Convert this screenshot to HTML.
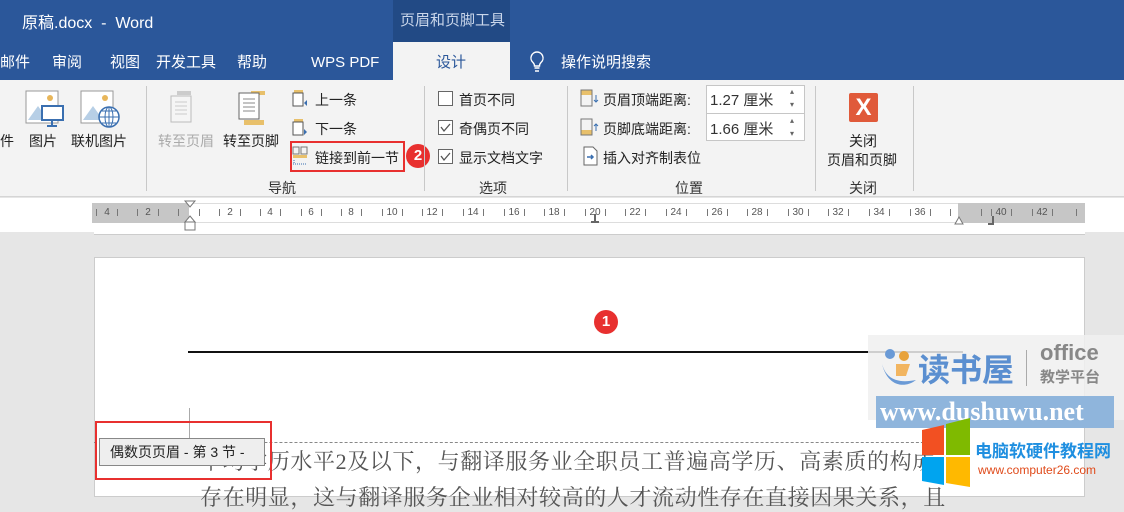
<!DOCTYPE html>
<html><head><meta charset="utf-8"><style>
*{margin:0;padding:0;box-sizing:border-box}
body{width:1124px;height:488px;overflow:hidden;background:#e6e6e6;font-family:"Liberation Sans","Noto Sans CJK SC",sans-serif;position:relative}
.a{position:absolute;white-space:nowrap}
.t{color:#fff;font-size:15px}
.r{font-size:14px;color:#222}
.g{font-size:14px;color:#333}
.vs{position:absolute;width:1px;background:#c8c8c8}
.badge{position:absolute;width:24px;height:24px;border-radius:12px;background:#e8302f;color:#fff;font-size:15px;font-weight:bold;text-align:center;line-height:24px}
.n{position:absolute;top:207px;font-size:10px;color:#555;transform:translateX(-50%)}
.k{position:absolute;top:209px;width:1px;height:7px;background:#777}
</style></head><body>
<div class="a" style="left:0;top:0;width:1124px;height:80px;background:#2b579a"></div>
<div class="a" style="left:393px;top:0;width:117px;height:42px;background:#224a85"></div>
<div class="a t" style="left:22px;top:9px;font-size:16px">原稿.docx &nbsp;-&nbsp; Word</div>
<div class="a t" style="left:400px;top:9px;color:#c9d6ea">页眉和页脚工具</div>
<div class="a t" style="left:0;top:51px">邮件</div>
<div class="a t" style="left:52px;top:51px">审阅</div>
<div class="a t" style="left:110px;top:51px">视图</div>
<div class="a t" style="left:156px;top:51px">开发工具</div>
<div class="a t" style="left:237px;top:51px">帮助</div>
<div class="a t" style="left:311px;top:54px">WPS PDF</div>
<div class="a" style="left:393px;top:42px;width:117px;height:39px;background:#f3f3f3"></div>
<div class="a" style="left:436px;top:51px;color:#2b579a;font-size:15px">设计</div>
<svg class="a" style="left:528px;top:50px" width="18" height="24"><path d="M9 2a6 6 0 0 0-4 10.5c1 1 1.5 2 1.5 3.5h5c0-1.5.5-2.5 1.5-3.5A6 6 0 0 0 9 2zM6.5 18h5M7 21h4" fill="none" stroke="#fff" stroke-width="1.4"/></svg>
<div class="a t" style="left:561px;top:51px">操作说明搜索</div>
<div class="a" style="left:0;top:80px;width:1124px;height:117px;background:#f3f3f3;border-bottom:1px solid #d5d5d5"></div>
<svg class="a" style="left:25px;top:90px" width="40" height="38"><rect x="1" y="1" width="32" height="32" fill="#fff" stroke="#999"/><circle cx="25" cy="8" r="3" fill="#e8b65a"/><path d="M3 30l10-14 10 14z" fill="#b7cfe6"/><rect x="17" y="16" width="21" height="14" fill="#fff" stroke="#3a6fb0" stroke-width="2"/><path d="M27 30v5M22 36h10" stroke="#3a6fb0" stroke-width="2"/></svg>
<svg class="a" style="left:80px;top:90px" width="42" height="38"><rect x="1" y="1" width="32" height="32" fill="#fff" stroke="#999"/><circle cx="25" cy="8" r="3" fill="#e8b65a"/><path d="M3 30l10-14 10 14z" fill="#b7cfe6"/><circle cx="29" cy="27" r="10" fill="#fff" stroke="#3a6fb0" stroke-width="1.5"/><path d="M19 27h20M29 17v20M22 21h14M22 33h14" stroke="#3a6fb0" stroke-width="1"/><ellipse cx="29" cy="27" rx="4" ry="10" fill="none" stroke="#3a6fb0"/></svg>
<div class="a r" style="left:0;top:131px">件</div>
<div class="a r" style="left:29px;top:131px">图片</div>
<div class="a r" style="left:71px;top:131px">联机图片</div>
<div class="vs" style="left:146px;top:86px;height:105px"></div>
<svg class="a" style="left:168px;top:90px" width="30" height="38"><rect x="9" y="1" width="14" height="4" fill="#ccc"/><rect x="3" y="6" width="20" height="26" fill="#f5f5f5" stroke="#bbb"/><path d="M7 12h12M7 16h12M7 20h12M7 24h12" stroke="#ccc"/></svg>
<svg class="a" style="left:236px;top:90px" width="30" height="38"><rect x="15" y="1" width="14" height="4" fill="#e8c06b"/><rect x="3" y="3" width="20" height="26" fill="#fff" stroke="#666"/><path d="M7 9h12M7 13h12M7 17h12M7 21h12" stroke="#888"/><rect x="8" y="30" width="20" height="5" fill="#e8c06b"/></svg>
<div class="a r" style="left:158px;top:131px;color:#aaa">转至页眉</div>
<div class="a r" style="left:223px;top:131px">转至页脚</div>
<svg class="a" style="left:292px;top:89px" width="16" height="18"><rect x="2" y="1" width="9" height="3" fill="#e8c06b"/><rect x="1" y="4" width="10" height="13" fill="#fff" stroke="#555"/><path d="M15 11l-3 3 3 3z" fill="#3a6fb0"/></svg>
<div class="a r" style="left:315px;top:90px">上一条</div>
<svg class="a" style="left:292px;top:118px" width="16" height="18"><rect x="2" y="1" width="9" height="3" fill="#e8c06b"/><rect x="1" y="4" width="10" height="13" fill="#fff" stroke="#555"/><path d="M12 11l3 3-3 3z" fill="#3a6fb0"/></svg>
<div class="a r" style="left:315px;top:119px">下一条</div>
<svg class="a" style="left:292px;top:146px" width="16" height="20"><rect x="1" y="1" width="6" height="7" fill="none" stroke="#777"/><rect x="9" y="1" width="6" height="7" fill="none" stroke="#777"/><rect x="1" y="9" width="14" height="3" fill="#e8c06b"/><path d="M2 14v4M1 18h14" stroke="#3a6fb0" stroke-dasharray="1 1"/></svg>
<div class="a r" style="left:315px;top:148px">链接到前一节</div>
<div class="a" style="left:290px;top:141px;width:115px;height:31px;border:2px solid #e8302f"></div>
<div class="badge" style="left:406px;top:144px">2</div>
<div class="a g" style="left:268px;top:178px">导航</div>
<div class="vs" style="left:424px;top:86px;height:105px"></div>
<svg class="a" style="left:438px;top:91px" width="15" height="75"><rect x="0.5" y="0.5" width="14" height="14" fill="#fff" stroke="#666"/><rect x="0.5" y="29.5" width="14" height="14" fill="#fff" stroke="#666"/><rect x="0.5" y="58.5" width="14" height="14" fill="#fff" stroke="#666"/><path d="M3 36l3 4 6-7M3 65l3 4 6-7" fill="none" stroke="#555" stroke-width="1.3"/></svg>
<div class="a r" style="left:459px;top:90px">首页不同</div>
<div class="a r" style="left:459px;top:119px">奇偶页不同</div>
<div class="a r" style="left:459px;top:148px">显示文档文字</div>
<div class="a g" style="left:479px;top:178px">选项</div>
<div class="vs" style="left:567px;top:86px;height:105px"></div>
<svg class="a" style="left:580px;top:89px" width="20" height="18"><rect x="1" y="1" width="11" height="5" fill="#e8c06b"/><rect x="1" y="1" width="11" height="16" fill="none" stroke="#777"/><path d="M16 6v7M14 11l2 2 2-2" stroke="#3a6fb0" fill="none"/></svg>
<div class="a r" style="left:603px;top:90px">页眉顶端距离:</div>
<svg class="a" style="left:580px;top:118px" width="20" height="18"><rect x="1" y="12" width="11" height="5" fill="#e8c06b"/><rect x="1" y="1" width="11" height="16" fill="none" stroke="#777"/><path d="M16 13v-7M14 8l2-2 2 2" stroke="#3a6fb0" fill="none"/></svg>
<div class="a r" style="left:603px;top:119px">页脚底端距离:</div>
<div class="a" style="left:706px;top:85px;width:99px;height:56px;border:1px solid #c6c6c6;background:#fff"></div>
<div class="a" style="left:706px;top:113px;width:99px;height:1px;background:#c6c6c6"></div>
<div class="a" style="left:710px;top:89px;font-size:15px;color:#333">1.27 厘米</div>
<div class="a" style="left:710px;top:118px;font-size:15px;color:#333">1.66 厘米</div>
<div class="a" style="left:790px;top:85px;font-size:8px;color:#666;line-height:13px">▴<br>▾</div>
<div class="a" style="left:790px;top:114px;font-size:8px;color:#666;line-height:13px">▴<br>▾</div>
<svg class="a" style="left:583px;top:146px" width="16" height="20"><path d="M1 1h9l4 4v14H1z" fill="#fff" stroke="#666"/><path d="M4 11h6M8 9l2 2-2 2" stroke="#3a6fb0" fill="none" stroke-width="1.5"/></svg>
<div class="a r" style="left:603px;top:148px">插入对齐制表位</div>
<div class="a g" style="left:675px;top:178px">位置</div>
<div class="vs" style="left:815px;top:86px;height:105px"></div>
<div class="a" style="left:849px;top:93px;width:29px;height:29px;background:#e05a3a;border-radius:2px;color:#fff;font-size:24px;font-weight:bold;text-align:center;line-height:29px">X</div>
<div class="a r" style="left:849px;top:131px">关闭</div>
<div class="a r" style="left:827px;top:150px">页眉和页脚</div>
<div class="a g" style="left:849px;top:178px">关闭</div>
<div class="vs" style="left:913px;top:86px;height:105px"></div>
<!-- ruler -->
<div class="a" style="left:0;top:198px;width:1124px;height:34px;background:#fff"></div>
<div class="a" style="left:92px;top:203px;width:993px;height:20px;background:#fff;border:1px solid #ddd"></div>
<div class="a" style="left:92px;top:203px;width:97px;height:20px;background:#c6c6c6"></div>
<div class="a" style="left:958px;top:203px;width:127px;height:20px;background:#c6c6c6"></div>
<div class="n" style="left:107px">4</div><div class="n" style="left:148px">2</div>
<div class="n" style="left:230px">2</div><div class="n" style="left:270px">4</div><div class="n" style="left:311px">6</div><div class="n" style="left:351px">8</div><div class="n" style="left:392px">10</div><div class="n" style="left:432px">12</div><div class="n" style="left:473px">14</div><div class="n" style="left:514px">16</div><div class="n" style="left:554px">18</div><div class="n" style="left:595px">20</div><div class="n" style="left:635px">22</div><div class="n" style="left:676px">24</div><div class="n" style="left:717px">26</div><div class="n" style="left:757px">28</div><div class="n" style="left:798px">30</div><div class="n" style="left:838px">32</div><div class="n" style="left:879px">34</div><div class="n" style="left:920px">36</div><div class="n" style="left:1001px">40</div><div class="n" style="left:1042px">42</div>
<div class="k" style="left:96px"></div><div class="k" style="left:117px"></div><div class="k" style="left:137px"></div><div class="k" style="left:158px"></div><div class="k" style="left:178px"></div><div class="k" style="left:199px"></div><div class="k" style="left:219px"></div><div class="k" style="left:240px"></div><div class="k" style="left:260px"></div><div class="k" style="left:280px"></div><div class="k" style="left:301px"></div><div class="k" style="left:321px"></div><div class="k" style="left:341px"></div><div class="k" style="left:361px"></div><div class="k" style="left:382px"></div><div class="k" style="left:402px"></div><div class="k" style="left:422px"></div><div class="k" style="left:442px"></div><div class="k" style="left:463px"></div><div class="k" style="left:483px"></div><div class="k" style="left:504px"></div><div class="k" style="left:524px"></div><div class="k" style="left:544px"></div><div class="k" style="left:564px"></div><div class="k" style="left:585px"></div><div class="k" style="left:605px"></div><div class="k" style="left:625px"></div><div class="k" style="left:645px"></div><div class="k" style="left:666px"></div><div class="k" style="left:686px"></div><div class="k" style="left:707px"></div><div class="k" style="left:727px"></div><div class="k" style="left:747px"></div><div class="k" style="left:767px"></div><div class="k" style="left:788px"></div><div class="k" style="left:808px"></div><div class="k" style="left:828px"></div><div class="k" style="left:848px"></div><div class="k" style="left:869px"></div><div class="k" style="left:889px"></div><div class="k" style="left:910px"></div><div class="k" style="left:930px"></div><div class="k" style="left:950px"></div><div class="k" style="left:981px"></div><div class="k" style="left:991px"></div><div class="k" style="left:1011px"></div><div class="k" style="left:1032px"></div><div class="k" style="left:1052px"></div><div class="k" style="left:1076px"></div>
<svg class="a" style="left:183px;top:200px" width="14" height="32"><path d="M2 1h10l-5 6zM7 16l5 6H2zM2 22h10v8H2z" fill="#fff" stroke="#777"/></svg>
<svg class="a" style="left:590px;top:214px" width="10" height="10"><path d="M5 0v8M1 8h8" stroke="#666" stroke-width="2"/></svg>
<svg class="a" style="left:953px;top:214px" width="46" height="12"><path d="M2 10l4-7 4 7z" fill="#fff" stroke="#777"/><path d="M40 2v8h-5" stroke="#666" stroke-width="2" fill="none"/></svg>
<div class="a" style="left:94px;top:232px;width:991px;height:3px;background:#fff;border-bottom:1px solid #ccc"></div>
<!-- page -->
<div class="a" style="left:94px;top:257px;width:991px;height:240px;background:#fff;border:1px solid #ccc"></div>
<div class="badge" style="left:594px;top:310px">1</div>
<div class="a" style="left:188px;top:351px;width:775px;height:2px;background:#111"></div>
<div class="a" style="left:189px;top:408px;width:1px;height:30px;background:#aaa"></div>
<div class="a" style="left:94px;top:442px;width:870px;border-top:1px dashed #888"></div>
<div class="a" style="left:200px;top:445px;font-size:22px;letter-spacing:0.6px;color:#555;font-family:'Liberation Serif','Noto Serif CJK SC',serif">平均学历水平2及以下，与翻译服务业全职员工普遍高学历、高素质的构成</div>
<div class="a" style="left:200px;top:481px;font-size:22px;letter-spacing:0.6px;color:#555;font-family:'Liberation Serif','Noto Serif CJK SC',serif">存在明显，这与翻译服务企业相对较高的人才流动性存在直接因果关系，且</div>
<div class="a" style="left:99px;top:438px;width:166px;height:28px;background:#eee;border:1px solid #888;font-size:14px;color:#222;line-height:26px;padding-left:10px">偶数页页眉 - 第 3 节 -</div>
<div class="a" style="left:95px;top:421px;width:177px;height:59px;border:2px solid #e8302f"></div>
<!-- watermark -->
<div class="a" style="left:868px;top:335px;width:256px;height:85px;background:rgba(240,240,240,0.85)"></div>
<svg class="a" style="left:878px;top:346px" width="40" height="44"><circle cx="12" cy="8" r="5" fill="#6a9ad6"/><circle cx="26" cy="10" r="5" fill="#e8a23a"/><path d="M4 18c4 14 14 20 34 16-10 8-28 8-34-16z" fill="#6a9ad6"/><path d="M18 18h14l-4 12h-10z" fill="#f2b560"/></svg>
<div class="a" style="left:918px;top:345px;font-size:32px;font-weight:bold;color:#5b8fd0">读书屋</div>
<div class="a" style="left:1026px;top:350px;width:1px;height:36px;background:#aaa"></div>
<div class="a" style="left:1040px;top:342px;font-size:22px;font-weight:bold;color:#888;line-height:22px">office<br><span style="font-size:15px">教学平台</span></div>
<div class="a" style="left:876px;top:396px;width:238px;height:32px;background:#8fb5dc;color:#fff;font-size:26px;font-weight:bold;font-family:'Liberation Serif',serif;line-height:32px;padding-left:4px">www.dushuwu.net</div>
<svg class="a" style="left:920px;top:410px" width="52" height="78"><path d="M2 20l22-5v30H2z" fill="#f25022"/><path d="M26 14l24-6v37H26z" fill="#7fba00"/><path d="M2 47h22v28l-22-4z" fill="#00a4ef"/><path d="M26 47h24v30l-24-4z" fill="#ffb900"/></svg>
<div class="a" style="left:975px;top:437px;font-size:17px;font-weight:bold;color:#1f8fe0">电脑软硬件教程网</div>
<div class="a" style="left:978px;top:463px;font-size:12px;color:#e04a1a">www.computer26.com</div>
</body></html>
